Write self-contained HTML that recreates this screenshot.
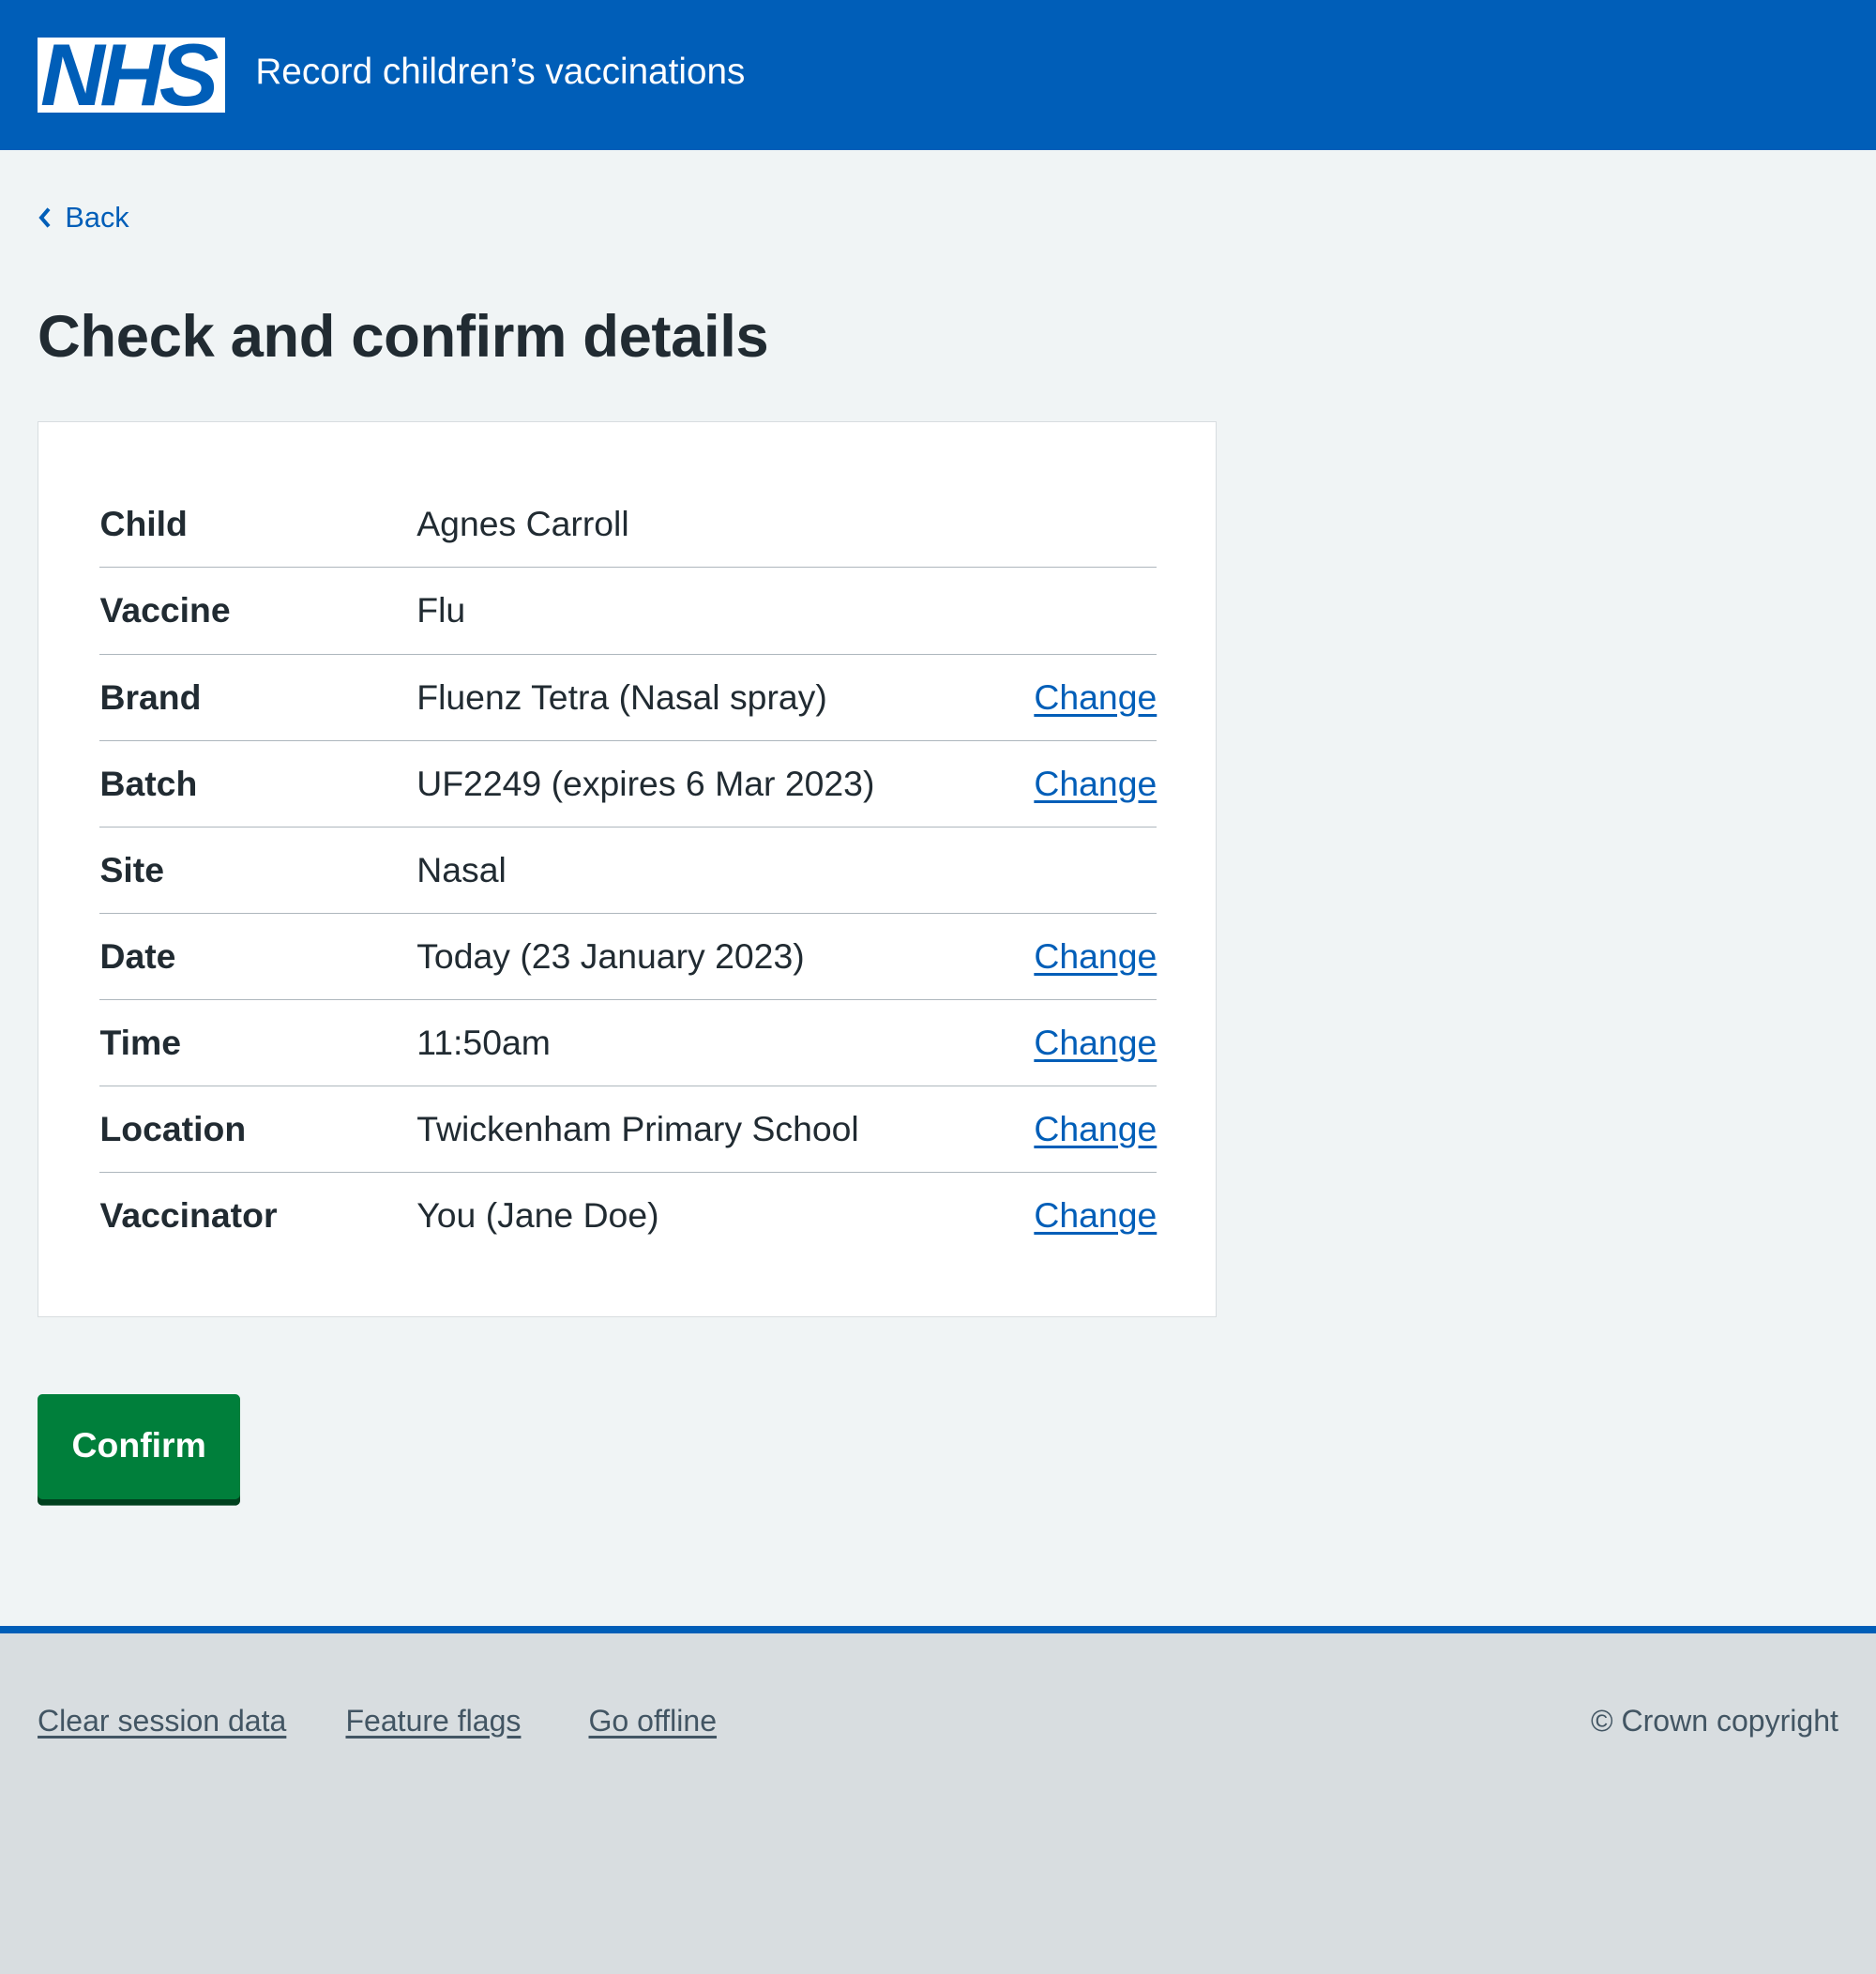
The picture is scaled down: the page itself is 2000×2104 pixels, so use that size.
<!DOCTYPE html>
<html><head><meta charset="utf-8"><style>
html,body{margin:0;padding:0}
body{width:1498px;height:1568.5px;zoom:1.33511;background:#f0f4f5;font-family:"Liberation Sans",Arial,sans-serif;color:#212b32;position:relative;overflow:hidden}
.hdr{position:absolute;left:0;top:0;width:1498px;height:120px;background:#005eb8}
.logo{position:absolute;left:30px;top:30px;width:150px;height:60px;background:#fff;overflow:hidden}
.logo span{position:absolute;left:2px;top:-6px;font:italic 900 70px/72px "Liberation Sans",sans-serif;color:#005eb8;letter-spacing:-4px;transform:scaleX(1.02);transform-origin:left}
.title{position:absolute;left:204px;top:41px;font-size:29px;color:#fff}
.back{position:absolute;left:30px;top:160px;font-size:23px;color:#005eb8}
.back svg{vertical-align:-2px;margin-right:10px}
h1{position:absolute;left:30px;top:242px;margin:0;font-size:47.5px;font-weight:bold;letter-spacing:-.3px}
.card{position:absolute;left:30px;top:336px;width:940px;height:714px;background:#fff;border:1px solid #d8dde0}
.row{position:absolute;left:49px;width:844px;height:68px;border-bottom:1px solid #aeb7bd;font-size:28px;line-height:28px}
.row.last{border-bottom:none}
.row b{position:absolute;left:0;top:20px}
.row .v{position:absolute;left:253px;top:20px}
.row a{position:absolute;right:0;top:20px;color:#005eb8;text-decoration:underline;text-underline-offset:4px}
.btn{position:absolute;left:30px;top:1113px;width:162px;height:84px;background:#007f3b;border-radius:4px;box-shadow:0 5px 0 #00401e;color:#fff;font-weight:bold;font-size:28px;line-height:82px;text-align:center}
.ftr{position:absolute;left:0;top:1298px;width:1498px;height:272px;background:#d8dde0;border-top:6px solid #005eb8}
.ftr a{position:absolute;top:56px;font-size:24px;color:#425563;text-decoration:underline;text-underline-offset:4px}
.ftr .c{position:absolute;right:30px;top:56px;font-size:24px;color:#425563}
</style></head><body>
<div class="hdr"><div class="logo"><span>NHS</span></div><div class="title">Record children’s vaccinations</div></div>
<div class="back"><svg width="12" height="18" viewBox="0 0 12 18"><path d="M9 2 L3 9 L9 16" fill="none" stroke="#005eb8" stroke-width="3"/></svg>Back</div>
<h1>Check and confirm details</h1>
<div class="card">
<div class="row" style="top:48px"><b>Child</b><span class="v">Agnes Carroll</span></div>
<div class="row" style="top:117px"><b>Vaccine</b><span class="v">Flu</span></div>
<div class="row" style="top:186px"><b>Brand</b><span class="v">Fluenz Tetra (Nasal spray)</span><a>Change</a></div>
<div class="row" style="top:255px"><b>Batch</b><span class="v">UF2249 (expires 6 Mar 2023)</span><a>Change</a></div>
<div class="row" style="top:324px"><b>Site</b><span class="v">Nasal</span></div>
<div class="row" style="top:393px"><b>Date</b><span class="v">Today (23 January 2023)</span><a>Change</a></div>
<div class="row" style="top:462px"><b>Time</b><span class="v">11:50am</span><a>Change</a></div>
<div class="row" style="top:531px"><b>Location</b><span class="v">Twickenham Primary School</span><a>Change</a></div>
<div class="row last" style="top:600px"><b>Vaccinator</b><span class="v">You (Jane Doe)</span><a>Change</a></div>
</div>
<div class="btn">Confirm</div>
<div class="ftr"><a style="left:30px">Clear session data</a><a style="left:276px">Feature flags</a><a style="left:470px">Go offline</a><span class="c">© Crown copyright</span></div>
</body></html>
